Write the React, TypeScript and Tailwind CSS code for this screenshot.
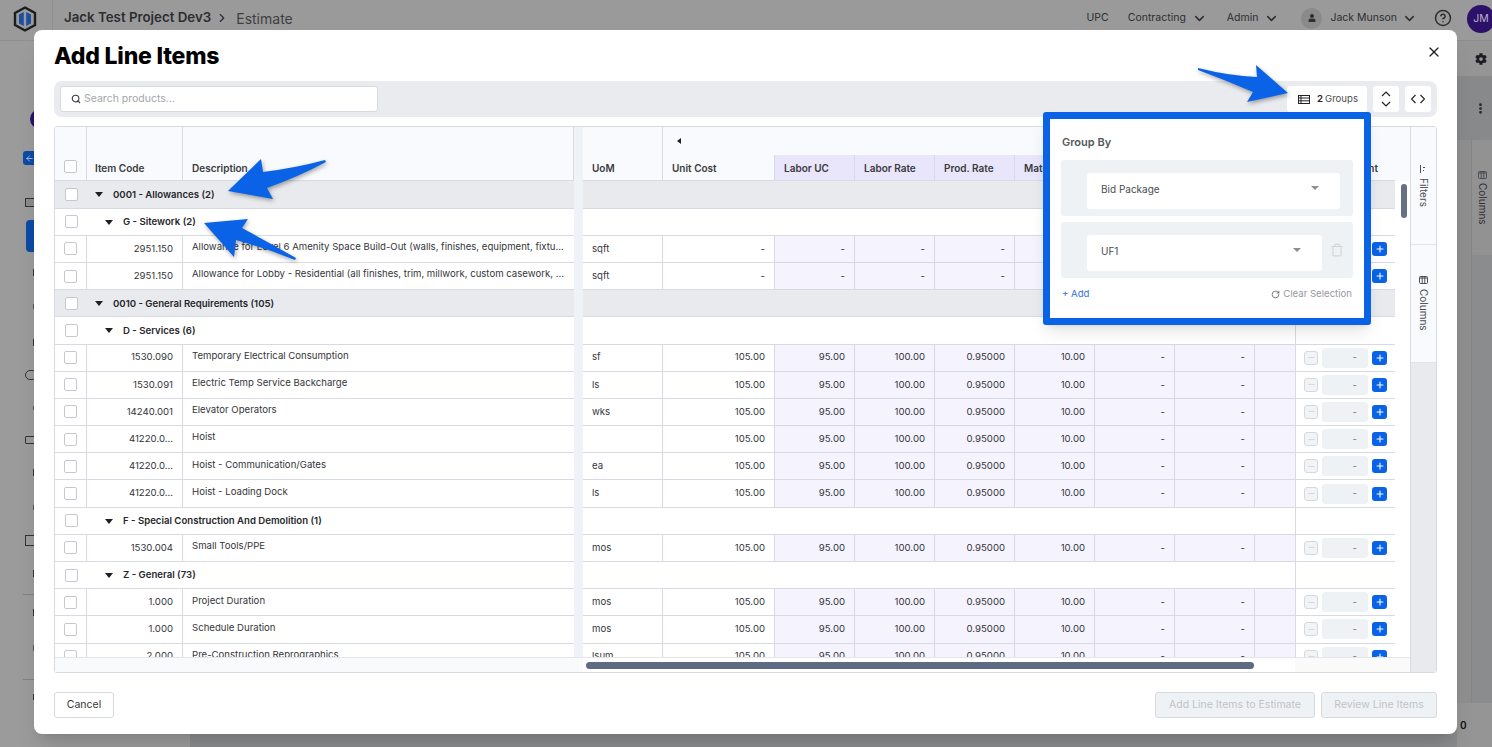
import React from 'react';
import { ChevronDown, ChevronRight, CircleHelp, EllipsisVertical, Plus, RotateCw, Search, Trash, X, ArrowLeft, Minus } from 'lucide-react';
import { FaCog, FaUser } from 'react-icons/fa';

type Item = { kind: 'item'; code: string; desc: string; uom: string; empty?: boolean };
type Group = { kind: 'group'; depth: 0 | 1; label: string };
type RowData = Item | Group;

const item = (code: string, desc: string, uom: string, empty = false): Item => ({ kind: 'item', code, desc, uom, empty });
const group = (depth: 0 | 1, label: string): Group => ({ kind: 'group', depth, label });

const rows: RowData[] = [
  group(0, '0001 - Allowances (2)'),
  group(1, 'G - Sitework (2)'),
  item('2951.150', 'Allowance for Level 6 Amenity Space Build-Out (walls, finishes, equipment, fixtu...', 'sqft', true),
  item('2951.150', 'Allowance for Lobby - Residential (all finishes, trim, millwork, custom casework, ...', 'sqft', true),
  group(0, '0010 - General Requirements (105)'),
  group(1, 'D - Services (6)'),
  item('1530.090', 'Temporary Electrical Consumption', 'sf'),
  item('1530.091', 'Electric Temp Service Backcharge', 'ls'),
  item('14240.001', 'Elevator Operators', 'wks'),
  item('41220.0...', 'Hoist', ''),
  item('41220.0...', 'Hoist - Communication/Gates', 'ea'),
  item('41220.0...', 'Hoist - Loading Dock', 'ls'),
  group(1, 'F - Special Construction And Demolition (1)'),
  item('1530.004', 'Small Tools/PPE', 'mos'),
  group(1, 'Z - General (73)'),
  item('1.000', 'Project Duration', 'mos'),
  item('1.000', 'Schedule Duration', 'mos'),
  item('2.000', 'Pre-Construction Reprographics', 'lsum'),
];

function Check() {
  return <span className="block h-[13px] w-[13px] rounded-[2px] border border-[#c6c8cc] bg-white" />;
}

function Caret() {
  return (
    <svg width="8" height="5" viewBox="0 0 8 5" className="shrink-0">
      <path d="M0 0h8L4 5z" fill="#1f2024" />
    </svg>
  );
}

function NumCell({ w, value }: { w: string; value: string }) {
  return (
    <div className={`${w} flex shrink-0 items-center justify-end border-l border-[#d7dae2] bg-[#f5f3fe] pr-[9px]`}>
      {value}
    </div>
  );
}

function RightActions() {
  return (
    <div className="flex w-[100px] items-center border-l border-[#d7dae2] pl-[8px]">
      <span className="flex h-[14px] w-[14px] items-center justify-center rounded-[3px] border border-[#d5d8de] bg-[#f1f3f5]">
        <Minus size={9} className="text-[#c9cdd3]" />
      </span>
      <span className="ml-[4px] flex h-[20px] w-[46px] items-center justify-end rounded-[3px] bg-[#eff2f5] pr-[11px] text-[#777]">-</span>
      <span className="ml-[4px] flex h-[14px] w-[15px] items-center justify-center rounded-[3px] bg-[#0a63e6]">
        <Plus size={10} strokeWidth={2.5} className="text-white" />
      </span>
    </div>
  );
}

function TableRow({ row }: { row: RowData }) {
  if (row.kind === 'group') {
    const bg = row.depth === 0 ? 'bg-[#e9eaee]' : 'bg-white';
    return (
      <div className="flex h-[27.2px] shrink-0 text-[9.6px]">
        <div className={`${bg} flex w-[519px] items-center border-b border-[#d7dae2] font-semibold text-[#26272b]`}>
          <div className="flex w-[32px] justify-center"><Check /></div>
          <div className={`flex items-center gap-[10px] pt-[1px] ${row.depth === 0 ? 'pl-[8px]' : 'pl-[18px] gap-[9px]'}`}>
            <Caret />
            <span>{row.label}</span>
          </div>
        </div>
        <div className="w-[9px] bg-[#eff2f6]" />
        <div className={`${bg} w-[712px] border-b border-[#d7dae2]`} />
        <div className={`${bg} w-[100px] border-b border-[#d7dae2] ${row.depth === 1 ? 'border-l' : ''}`} />
        <div className="w-[15px]" />
      </div>
    );
  }
  const d = (v: string) => (row.empty ? '-' : v);
  return (
    <div className="flex h-[27.2px] shrink-0 text-[9.6px] text-[#34353a]">
      <div className="flex w-[519px] overflow-hidden border-b border-[#d7dae2]">
        <div className="flex w-[32px] shrink-0 items-center justify-center border-r border-[#d7dae2]"><Check /></div>
        <div className="flex w-[96px] shrink-0 items-center justify-end border-r border-[#d7dae2] pr-[9px]">{row.code}</div>
        <div className="flex min-w-0 flex-1 items-center whitespace-nowrap pb-[3px] pl-[9px]">{row.desc}</div>
      </div>
      <div className="w-[9px] bg-[#eff2f6]" />
      <div className="flex w-[712px] border-b border-[#d7dae2]">
        <div className="flex w-[79px] shrink-0 items-center pl-[9px]">{row.uom}</div>
        <div className="flex w-[112px] shrink-0 items-center justify-end border-l border-[#d7dae2] pr-[9px]">{d('105.00')}</div>
        <NumCell w="w-[80px]" value={d('95.00')} />
        <NumCell w="w-[80px]" value={d('100.00')} />
        <NumCell w="w-[80px]" value={d('0.95000')} />
        <NumCell w="w-[80px]" value={d('10.00')} />
        <NumCell w="w-[80px]" value="-" />
        <NumCell w="w-[80px]" value="-" />
        <div className="w-[41px] border-l border-[#d7dae2] bg-[#f5f3fe]" />
      </div>
      <div className="flex border-b border-[#d7dae2]"><RightActions /></div>
      <div className="w-[15px]" />
    </div>
  );
}

function HeadCell({ w, label, purple, first }: { w: string; label: string; purple?: boolean; first?: boolean }) {
  return (
    <div className={`${w} ${purple ? 'bg-[#e9e5fb]' : ''} ${first ? '' : 'border-l border-[#d7dae2]'} flex h-full shrink-0 items-center pl-[9px] pt-[1px]`}>
      {label}
    </div>
  );
}

function ColumnsIcon() {
  return (
    <svg width="9" height="8" viewBox="0 0 9 8" fill="none" stroke="#4b4d52" strokeWidth="1">
      <rect x="0.5" y="0.5" width="8" height="7" rx="1" />
      <path d="M3.2 0.5v7M5.8 0.5v7M0.5 2h8" />
    </svg>
  );
}

function SideTab({ label, icon, h }: { label: string; icon: React.ReactNode; h: string }) {
  return (
    <div className={`${h} flex shrink-0 flex-col items-center justify-center gap-[5px] border-b border-[#e2e4ea] bg-[#f9fafe] text-[#4b4d52]`}>
      {icon}
      <span className="[writing-mode:vertical-rl]">{label}</span>
    </div>
  );
}

function GroupSelect({ label, trash }: { label: string; trash?: boolean }) {
  return (
    <div className="flex h-[56px] items-start rounded-[3px] bg-[#eff2f5] pl-[26px] pt-[13px]">
      <div className={`flex h-[36px] items-start justify-between rounded-[3px] bg-white pl-[14px] pr-[21px] pt-[9px] ${trash ? 'w-[235px]' : 'w-[253px]'}`}>
        <span className="text-[#4a4c50]">{label}</span>
        <svg width="8" height="4" viewBox="0 0 8 4" className="mt-[4px]"><path d="M0 0h8L4 4z" fill="#8b8e94" /></svg>
      </div>
      {trash && <Trash size={14} className="ml-[8px] mt-[8px] text-[#d2d5da]" />}
    </div>
  );
}

export default function App() {
  return (
    <div className="relative flex h-screen w-full flex-col overflow-hidden bg-[#8a8b8d] font-['Inter',sans-serif] text-[10px]">
      {/* page behind the dialog */}
      <header className="flex h-[41px] shrink-0 items-start border-b border-[#8d8d8e] bg-[#9a9a9a] text-[#2d2e31]">
        <div className="flex h-[40px] w-[53px] items-start justify-center border-r border-[#8f8f8f] pr-[2px] pt-[6px]">
          <svg width="24" height="26" viewBox="0 0 24 26">
            <path d="M12 1.5 22 7v12l-10 5.5L2 19V7z" fill="none" stroke="#1c1d20" strokeWidth="2.4" />
            <path d="M10.8 6 6 8.5v9l4.8 2.5zM13.2 6 18 8.5v9L13.2 20z" fill="#1d4f9f" />
          </svg>
        </div>
        <div className="ml-[11px] flex h-[36px] items-center">
          <span className="text-[13.3px] font-semibold">Jack Test Project Dev3</span>
          <ChevronRight size={14} className="ml-[4px] mr-[7px]" />
          <span className="text-[14px] text-[#3e3f43]">Estimate</span>
        </div>
        <div className="ml-auto flex h-[36px] items-center text-[10.5px]">
          <span>UPC</span>
          <span className="ml-[19px]">Contracting</span>
          <ChevronDown size={15} strokeWidth={2.4} className="ml-[6px]" />
          <span className="ml-[20px]">Admin</span>
          <ChevronDown size={15} strokeWidth={2.4} className="ml-[6px]" />
          <span className="ml-[22px] flex h-[21px] w-[21px] items-center justify-center rounded-full bg-[#8a8a8b]">
            <FaUser size={8} />
          </span>
          <span className="ml-[8px]">Jack Munson</span>
          <ChevronDown size={15} strokeWidth={2.4} className="ml-[5px]" />
          <CircleHelp size={18} className="ml-[17px]" />
          <span className="ml-[15px] mr-[-3px] mt-[1px] flex h-[28px] w-[28px] items-center justify-center rounded-full bg-[#2c1168] text-[#b9b2c9]">JM</span>
        </div>
      </header>

      <div className="flex min-h-0 flex-1">
        <aside className="flex w-[190px] shrink-0 flex-col bg-[#9b9b9b]">
          <span className="ml-[30px] mt-[68px] h-[20px] w-[20px] rounded-full bg-[#2c1168]" />
          <span className="ml-[23px] mt-[22px] flex h-[14px] w-[24px] items-center rounded-[3px] bg-[#0c4aa6] pl-[2px]">
            <ArrowLeft size={9} className="text-[#c9d6ec]" />
          </span>
          <span className="ml-[25px] mt-[33px] h-[9px] w-[20px] border border-[#333] bg-[#8a8a8a]" />
          <span className="ml-[26px] mt-[13px] h-[32px] w-[20px] rounded-[4px] bg-[#0c4aa6]" />
          <span className="ml-[33px] mt-[17px] h-[7px] w-[4px] bg-[#333]" />
          <span className="ml-[33px] mt-[28px] h-[5px] w-[4px] bg-[#555]" />
          <span className="ml-[33px] mt-[30px] h-[7px] w-[4px] bg-[#333]" />
          <span className="ml-[25px] mt-[24px] h-[10px] w-[12px] rounded-full border border-[#333]" />
          <span className="ml-[33px] mt-[26px] h-[4px] w-[4px] bg-[#555]" />
          <span className="ml-[25px] mt-[26px] h-[8px] w-[14px] rounded-[1px] border border-[#333]" />
          <span className="ml-[33px] mt-[25px] h-[7px] w-[4px] bg-[#333]" />
          <span className="ml-[33px] mt-[29px] h-[5px] w-[4px] bg-[#555]" />
          <span className="ml-[25px] mt-[25px] h-[11px] w-[12px] border border-[#333]" />
          <span className="ml-[33px] mt-[24px] h-[7px] w-[4px] bg-[#333]" />
          <span className="ml-[23px] mt-[17px] h-px w-[20px] bg-[#808080]" />
          <span className="ml-[33px] mt-[14px] h-[7px] w-[4px] bg-[#333]" />
          <span className="ml-[33px] mt-[29px] h-[6px] w-[4px] bg-[#555]" />
          <span className="ml-[23px] mt-[28px] h-px w-[20px] bg-[#808080]" />
          <span className="ml-[33px] mt-[14px] h-[6px] w-[4px] bg-[#333]" />
        </aside>
        <main className="flex-1" />
        <div className="flex w-[35px] shrink-0 flex-col">
          <div className="flex h-[36px] items-center justify-end border-b border-[#8a8a8b] bg-[#959596] pr-[5px] text-[#1c1d20]">
            <FaCog size={12} />
          </div>
          <div className="flex h-[63px] items-center justify-end bg-[#88898b] pr-[5px] text-[#1c1d20]">
            <EllipsisVertical size={13} strokeWidth={3} />
          </div>
          <div className="flex h-[563px] bg-[#8f8f90]">
            <div className="w-[14px]" />
            <div className="flex flex-1 flex-col border-l border-[#868687] bg-[#8b8c8e]">
              <div className="flex h-[115px] flex-col items-center justify-center gap-[4px] bg-[#929293] text-[#333437]">
                <ColumnsIcon />
                <span className="[writing-mode:vertical-rl]">Columns</span>
              </div>
            </div>
          </div>
          <div className="flex flex-1 items-center bg-[#959595] pl-[3px] font-semibold text-[#111]">0</div>
        </div>
      </div>

      {/* dialog */}
      <div className="absolute left-[34px] top-[30px] flex h-[704px] w-[1423px] flex-col rounded-[8px] bg-white px-[20px] shadow-xl">
        <div className="flex h-[51px] shrink-0 items-start justify-between">
          <h1 className="mt-[9px] text-[23px] font-extrabold leading-[34px] tracking-[-0.2px] text-black">Add Line Items</h1>
          <X size={16} strokeWidth={1.8} className="mr-[-5px] mt-[14px] text-[#1c1d20]" />
        </div>

        <div className="flex h-[36px] shrink-0 items-center rounded-[8px] bg-[#eaebef] pl-[6px] pr-[6px]">
          <div className="flex h-[26px] w-[318px] items-center gap-[3px] rounded-[3px] border border-[#d7dae2] bg-white pl-[10px] text-[#a3a6ac]">
            <Search size={10} strokeWidth={2.6} className="text-[#3a3b40]" />
            <span className="text-[10.5px]">Search products...</span>
          </div>
          <div className="ml-auto flex h-[26px] w-[80px] items-center rounded-[3px] bg-white pl-[11px] text-[9.6px] text-[#4a4c50]">
            <svg width="12" height="9" viewBox="0 0 12 9" fill="none" stroke="#222327">
              <rect x="0.5" y="0.5" width="11" height="8" />
              <path d="M0.5 3h11M0.5 5.8h11M3 0.5v8" />
            </svg>
            <span className="ml-[7px] font-semibold text-[#1f2024]">2</span>
            <span className="ml-[2px]">Groups</span>
          </div>
          <div className="ml-[6px] flex h-[26px] w-[26px] items-center justify-center rounded-[3px] bg-white">
            <svg width="10" height="16" viewBox="0 0 10 16" fill="none" stroke="#222327" strokeWidth="1.2">
              <path d="M1 5l4-4 4 4M1 11l4 4 4-4" />
            </svg>
          </div>
          <div className="ml-[6px] flex h-[26px] w-[26px] items-center justify-center rounded-[3px] bg-white">
            <svg width="14" height="10" viewBox="0 0 14 10" fill="none" stroke="#222327" strokeWidth="1.2">
              <path d="M4.5 1l-4 4 4 4M9.5 1l4 4-4 4" />
            </svg>
          </div>
        </div>

        <div className="mt-[9px] flex h-[547px] shrink-0 rounded-[3px] border border-[#d7dae2]">
          <div className="flex w-[1355px] flex-col">
            <div className="relative flex h-[530px] flex-col overflow-hidden">
              <div className="flex h-[54.4px] shrink-0 font-semibold text-[#3a3b40]">
                <div className="flex w-[519px] border-b border-r border-[#d7dae2] bg-[#f9fafe]">
                  <div className="flex w-[32px] shrink-0 items-end justify-center border-r border-[#d7dae2] pb-[7px]"><Check /></div>
                  <div className="flex w-[96px] shrink-0 items-end border-r border-[#d7dae2] pb-[4px] pl-[8px]">Item Code</div>
                  <div className="flex flex-1 items-end pb-[4px] pl-[9px]">Description</div>
                </div>
                <div className="w-[9px] bg-[#eff2f6]" />
                <div className="flex w-[712px] flex-col border-b border-[#d7dae2] bg-[#f9fafe]">
                  <div className="flex h-[28px]">
                    <div className="w-[79px]" />
                    <div className="flex items-center border-l border-[#d7dae2] pl-[14px]">
                      <svg width="4" height="6" viewBox="0 0 4 6"><path d="M4 0v6L0 3z" fill="#1f2024" /></svg>
                    </div>
                  </div>
                  <div className="flex h-[25.4px]">
                    <HeadCell w="w-[79px]" label="UoM" first />
                    <HeadCell w="w-[112px]" label="Unit Cost" />
                    <HeadCell w="w-[80px]" label="Labor UC" purple />
                    <HeadCell w="w-[80px]" label="Labor Rate" purple />
                    <HeadCell w="w-[80px]" label="Prod. Rate" purple />
                    <HeadCell w="w-[80px]" label="Material UC" purple />
                    <HeadCell w="w-[80px]" label="Material Rate" purple />
                    <HeadCell w="w-[80px]" label="Sub UC" purple />
                    <div className="w-[41px] border-l border-[#d7dae2] bg-[#e9e5fb]" />
                  </div>
                </div>
                <div className="flex w-[100px] items-end justify-end border-b border-l border-[#d7dae2] bg-[#f9fafe] pb-[4px] pr-[17px]">Amount</div>
                <div className="w-[15px] bg-[#f9fafe]" />
              </div>
              {rows.map((row, i) => (
                <TableRow key={i} row={row} />
              ))}
              <span className="absolute left-[1346px] top-[57px] h-[34px] w-[6px] rounded-full bg-[#667085]" />
            </div>
            <div className="flex h-[15px] shrink-0 border-t border-[#e4e6eb]">
              <div className="w-[528px] bg-[#f9fafb]" />
              <div className="flex w-[712px] items-center pl-[3px]">
                <span className="h-[7px] w-[668px] rounded-full bg-[#5f6b82]" />
              </div>
              <div className="flex-1 bg-[#fafafa]" />
            </div>
          </div>
          <div className="flex flex-1 flex-col border-l border-[#d7dae2] bg-[#e9eaee]">
            <SideTab
              h="h-[118px]"
              label="Filters"
              icon={
                <svg width="8" height="8" viewBox="0 0 8 8" fill="none" stroke="#4b4d52">
                  <path d="M0.5 0v8M3 2.5h2M3 5.5h1" />
                </svg>
              }
            />
            <SideTab h="h-[118px]" label="Columns" icon={<ColumnsIcon />} />
          </div>
        </div>

        <div className="mt-[19px] flex items-start justify-between text-[10.5px]">
          <button className="h-[26px] w-[60px] rounded-[3px] border border-[#d7dae2] bg-white text-[#34353a]">Cancel</button>
          <div className="flex gap-[6px]">
            <button className="h-[26px] w-[160px] rounded-[3px] border border-[#d7dae2] bg-[#eff2f5] text-[#bfc3c9]">Add Line Items to Estimate</button>
            <button className="h-[26px] w-[116px] rounded-[3px] border border-[#d7dae2] bg-[#eff2f5] text-[#bfc3c9]">Review Line Items</button>
          </div>
        </div>
      </div>

      {/* group by popover */}
      <div className="absolute left-[1043px] top-[112px] flex h-[213px] w-[328px] flex-col rounded-[3px] border-[7px] border-[#0a63e6] bg-white px-[11px] shadow-lg">
        <div className="mt-[16px] pl-px text-[11px] font-semibold leading-[14px] text-[#55575c]">Group By</div>
        <div className="mt-[11px] flex flex-col gap-[6px]">
          <GroupSelect label="Bid Package" />
          <GroupSelect label="UF1" trash />
        </div>
        <div className="mt-[9px] flex items-center justify-between pl-[1px] text-[9.6px] text-[#2f6fe0]">
          <span>+ Add</span>
          <span className="flex items-center gap-[3px] pr-px text-[#96999f]">
            <RotateCw size={9} className="text-[#55575c]" />
            Clear Selection
          </span>
        </div>
      </div>

      {/* annotation arrows */}
      <svg className="pointer-events-none absolute inset-0 drop-shadow-[1px_2px_2px_rgba(0,0,0,0.35)]" width="1492" height="747" viewBox="0 0 1492 747">
        <path d="M325 160Q295 168 263 172L261 159 228 191 273 199 267 188Q300 176 326 162Z" fill="#0a63e6" />
        <path d="M204 223 248 219 242 228Q270 243 296 258L295 260Q265 248 236 240L234 257Z" fill="#0a63e6" />
        <path d="M1198 68Q1230 76 1257 77L1256 65 1288 93 1247 102 1253 92Q1225 80 1198 70Z" fill="#0a63e6" />
      </svg>
    </div>
  );
}
